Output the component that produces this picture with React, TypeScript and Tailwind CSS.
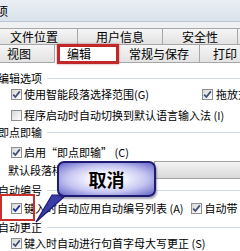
import React from "react";

const Check = ({ on, dark }: { on?: boolean; dark?: boolean }) => (
  <span className="w-[11px] h-[11px] border border-[#8e8f8f] bg-gradient-to-br from-[#d8d8d8] to-white flex items-center justify-center shrink-0">
    {on && (
      <svg width="9" height="9" viewBox="0 0 9 9">
        <path
          d="M1.2 4.6 L3.4 7 L7.8 1.4"
          fill="none"
          stroke={dark ? "#1a2c96" : "#3b4c78"}
          strokeWidth="1.7"
        />
      </svg>
    )}
  </span>
);

const Group = ({ title, className }: { title: string; className?: string }) => (
  <div className={`flex items-center h-[16px] ${className ?? ""}`}>
    <span className="-ml-[2px] whitespace-nowrap">{title}</span>
    <span className="flex-1 h-px bg-[#d3dde6] ml-[5px]" />
  </div>
);

const Row = ({
  on,
  dark,
  label,
  className,
  children,
}: {
  on?: boolean;
  dark?: boolean;
  label: string;
  className?: string;
  children?: React.ReactNode;
}) => (
  <div className={`flex items-center h-[16px] pl-[11px] whitespace-nowrap ${className ?? ""}`}>
    <Check on={on} dark={dark} />
    <span className="ml-[2px]">{label}</span>
    {children}
  </div>
);

export default function App() {
  return (
    <div className="relative w-[240px] h-[251px] overflow-hidden bg-white text-[11px] leading-none text-black font-['Noto_Sans_CJK_SC',sans-serif]">
      {/* title strip */}
      <div className="h-[22px] bg-gradient-to-b from-[#e9eef4] to-[#d9e2eb] border-b border-[#b8c7d6] flex items-center">
        <span className="-ml-[4px] text-[12px]">项</span>
      </div>

      {/* tabs */}
      <div className="h-[41px] bg-[#eef0f2] pt-[6px] text-[12px]">
        <div className="flex h-[17px] -ml-[10px]">
          <div className="w-[88px] shrink-0 border border-[#a7a7a7] bg-gradient-to-b from-[#f6f6f6] to-[#e2e2e2] flex items-center justify-center">文件位置</div>
          <div className="w-[85px] shrink-0 border border-l-0 border-[#a7a7a7] bg-gradient-to-b from-[#f6f6f6] to-[#e2e2e2] flex items-center justify-center">用户信息</div>
          <div className="w-[75px] shrink-0 border border-l-0 border-[#a7a7a7] bg-gradient-to-b from-[#f6f6f6] to-[#e2e2e2] flex items-center justify-center">安全性</div>
          <div className="w-[20px] shrink-0 border border-l-0 border-[#a7a7a7] bg-gradient-to-b from-[#f6f6f6] to-[#e2e2e2]" />
        </div>
        <div className="flex h-[18px] -ml-[20px]">
          <div className="w-[75px] shrink-0 border border-t-0 border-[#a7a7a7] bg-gradient-to-b from-[#f6f6f6] to-[#e2e2e2] flex items-center justify-center pl-[3px]">视图</div>
          <div className="w-[63px] shrink-0 bg-white flex items-center pl-[12px]">编辑</div>
          <div className="w-[82px] shrink-0 border border-t-0 border-[#a7a7a7] bg-gradient-to-b from-[#f6f6f6] to-[#e2e2e2] flex items-center justify-center">常规与保存</div>
          <div className="w-[60px] shrink-0 border border-t-0 border-l-0 border-[#a7a7a7] bg-gradient-to-b from-[#f6f6f6] to-[#e2e2e2] flex items-center pl-[13px]">打印</div>
        </div>
      </div>

      {/* content */}
      <div className="flex flex-col">
        <Group title="编辑选项" className="mt-[7px]" />
        <Row on label="使用智能段落选择范围(G)">
          <span className="ml-auto mr-[-30px] flex items-center gap-[3px] w-[68px]">
            <Check on />
            <span>拖放式</span>
          </span>
        </Row>
        <Row label="程序启动时自动切换到默认语言输入法 (I)" className="mt-[5px]" />
        <Group title="即点即输" className="mt-[1px]" />
        <Row on label="启用“即点即输” (C)" className="mt-[4px]" />
        <div className="mt-[1px] h-[18px] flex items-center pl-[8px] whitespace-nowrap">
          <span>默认段落样式</span>
          <span className="ml-auto mr-[-6px] w-[92px] h-[18px] border border-[#a2a2a2] bg-gradient-to-b from-[#f4f4f4] to-[#d9d9d9]" />
        </div>
        <Group title="自动编号" className="mt-[3px]" />
        <Row on dark label="键入时自动应用自动编号列表 (A)" className="mt-[2px]">
          <span className="ml-[7px] flex items-center gap-[3px]">
            <Check on />
            <span>自动带</span>
          </span>
        </Row>
        <Group title="自动更正" className="mt-[3px]" />
        <Row on label="键入时自动进行句首字母大写更正 (S)" />
      </div>

      {/* annotation: red boxes */}
      <div className="absolute left-[57px] top-[44px] w-[62px] h-[20px] border-[3px] border-[#c0282a] shadow-[0_0_2px_rgba(120,0,0,0.5)]" />
      <div className="absolute left-[0px] top-[194px] w-[35px] h-[27px] border-2 border-[#c8302c]" />

      {/* callout tail */}
      <svg className="absolute left-0 top-0" width="240" height="251" viewBox="0 0 240 251">
        <polygon points="52,195 66,195 36,222" fill="#3c3ca8" stroke="#1c1c74" strokeWidth="1.2" />
      </svg>

      {/* callout */}
      <div className="absolute left-[57px] top-[161px] w-[99px] h-[36px] rounded-[7px] border-2 border-[#1d1d70] bg-[radial-gradient(ellipse_at_center,#f6f6ff_25%,#c4c4f0_60%,#6464c8_100%)] flex items-center justify-center shadow-[1px_2px_2px_rgba(0,0,60,0.35)]">
        <span className="text-[18px] font-bold text-black">取消</span>
      </div>
    </div>
  );
}
